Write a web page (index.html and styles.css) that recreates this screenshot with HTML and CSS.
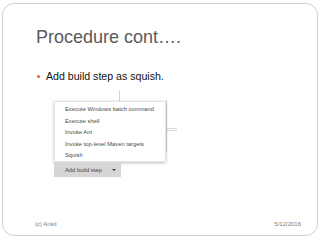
FILE: index.html
```html
<!DOCTYPE html>
<html>
<head>
<meta charset="utf-8">
<link rel="stylesheet" href="styles.css">
</head>
<body>
<div class="slide">
  <h1 class="title">Procedure cont….</h1>
  <ul class="bullets">
    <li><span class="dot"></span>Add build step as squish.</li>
  </ul>
  <div class="shot">
    <div class="stem"></div>
    <div class="side"></div>
    <div class="tab"></div>
    <div class="menu">
      <div class="item">Execute Windows batch command</div>
      <div class="item">Execute shell</div>
      <div class="item">Invoke Ant</div>
      <div class="item">Invoke top-level Maven targets</div>
      <div class="item">Squish</div>
    </div>
    <div class="button"><span>Add build step</span><span class="caret"></span></div>
  </div>
  <div class="footer">
    <span>(c) Ankit</span>
    <span>5/12/2016</span>
  </div>
</div>
</body>
</html>
```
FILE: styles.css
```css
html, body {
  margin: 0;
  padding: 0;
  background: #fff;
}
body {
  width: 320px;
  height: 240px;
  overflow: hidden;
  font-family: "Liberation Sans", Arial, sans-serif;
}
.slide {
  box-sizing: border-box;
  margin: 3px 2px 0 2px;
  height: 233px;
  border: 1px solid #cfcfcf;
  border-radius: 12px;
  display: flex;
  flex-direction: column;
  position: relative;
}
.title {
  margin: 22px 0 0 33px;
  font-size: 18px;
  font-weight: normal;
  line-height: 22px;
  color: #5a5a5a;
}
.bullets {
  list-style: none;
  margin: 21px 0 0 33px;
  padding: 0;
}
.bullets li {
  font-size: 10.6px;
  line-height: 14px;
  color: #111;
  display: flex;
  align-items: center;
}
.dot {
  width: 3px;
  height: 3px;
  border-radius: 50%;
  background: #e0662c;
  margin-right: 6px;
  margin-left: 1px;
}
.shot {
  position: relative;
  margin: 7px 0 0 50px;
  width: 130px;
  height: 88px;
}
.stem {
  position: absolute;
  left: 66px;
  top: 0;
  width: 1px;
  height: 11px;
  background: #d4d4d4;
}
.side {
  position: absolute;
  left: 113px;
  top: 10px;
  width: 1px;
  height: 52px;
  background: #d6d6d6;
}
.tab {
  position: absolute;
  left: 114px;
  top: 38px;
  width: 10px;
  height: 1px;
  border-top: 1px solid #d8d8d8;
  border-bottom: 1px solid #d8d8d8;
}
.menu {
  position: absolute;
  left: 1px;
  top: 11px;
  width: 112px;
  height: 61px;
  box-sizing: border-box;
  background: #fff;
  border: 1px solid #e4e4e4;
  box-shadow: 0 1px 3px rgba(0,0,0,0.25);
  padding: 2px 0 0 10px;
}
.item {
  font-size: 5.8px;
  line-height: 11.5px;
  color: #4a4a4a;
  white-space: nowrap;
}
.button {
  position: absolute;
  left: 1px;
  top: 72px;
  width: 67px;
  height: 15px;
  background: #d6d6d6;
  display: flex;
  align-items: center;
  padding-left: 11px;
  box-sizing: border-box;
  font-size: 5.8px;
  color: #444;
}
.caret {
  margin-left: 10px;
  width: 0;
  height: 0;
  border-left: 2px solid transparent;
  border-right: 2px solid transparent;
  border-top: 2px solid #333;
}
.footer {
  margin-top: auto;
  margin-bottom: 8px;
  padding: 0 16px 0 32px;
  display: flex;
  justify-content: space-between;
  font-size: 6px;
  color: #7a7a7a;
}
```
